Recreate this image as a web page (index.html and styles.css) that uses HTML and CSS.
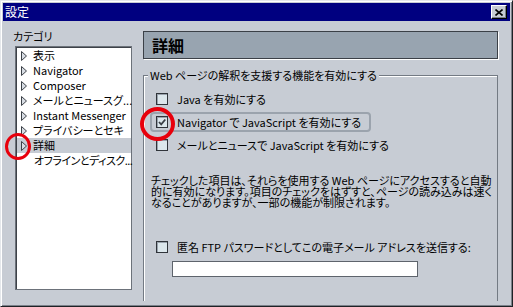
FILE: index.html
```html
<!DOCTYPE html>
<html lang="ja">
<head>
    <meta charset="UTF-8">
    <meta name="viewport" content="width=device-width, initial-scale=1.0">
    <title>設定</title>
    <link rel="stylesheet" href="styles.css">
</head>
<body>

<div class="window">
    <div class="titlebar">
        <span class="title">設定</span>
        <span class="close-btn">
            <svg width="8" height="7" viewBox="0 0 8 7">
                <path d="M0.5 0.5 L7.5 6.5 M7.5 0.5 L0.5 6.5" stroke="#000" stroke-width="1.6" fill="none"/>
            </svg>
        </span>
    </div>

    <div class="content">
        <div class="categories">
            <div class="cat-label">カテゴリ</div>
            <ul class="cat-list">
                <li><svg class="twisty" width="6" height="10" viewBox="0 0 6 10"><polygon points="0.5,0.5 5.5,5 0.5,9.5" fill="#d8dde4" stroke="#3c4148"/></svg>表示</li>
                <li><svg class="twisty" width="6" height="10" viewBox="0 0 6 10"><polygon points="0.5,0.5 5.5,5 0.5,9.5" fill="#d8dde4" stroke="#3c4148"/></svg>Navigator</li>
                <li><svg class="twisty" width="6" height="10" viewBox="0 0 6 10"><polygon points="0.5,0.5 5.5,5 0.5,9.5" fill="#d8dde4" stroke="#3c4148"/></svg>Composer</li>
                <li><svg class="twisty" width="6" height="10" viewBox="0 0 6 10"><polygon points="0.5,0.5 5.5,5 0.5,9.5" fill="#d8dde4" stroke="#3c4148"/></svg>メールとニュースグ...</li>
                <li><svg class="twisty" width="6" height="10" viewBox="0 0 6 10"><polygon points="0.5,0.5 5.5,5 0.5,9.5" fill="#d8dde4" stroke="#3c4148"/></svg>Instant Messenger</li>
                <li><svg class="twisty" width="6" height="10" viewBox="0 0 6 10"><polygon points="0.5,0.5 5.5,5 0.5,9.5" fill="#d8dde4" stroke="#3c4148"/></svg>プライバシーとセキ</li>
                <li class="selected"><svg class="twisty" width="6" height="10" viewBox="0 0 6 10"><polygon points="0.5,0.5 5.5,5 0.5,9.5" fill="#d8dde4" stroke="#3c4148"/></svg>詳細</li>
                <li class="leaf">オフラインとディスク...</li>
            </ul>
        </div>

        <div class="panel">
            <div class="panel-header">詳細</div>

            <fieldset class="group">
                <legend>Web ページの解釈を支援する機能を有効にする</legend>

                <label class="option"><span class="check"></span>Java を有効にする</label>
                <label class="option focused">
                    <span class="check">
                        <svg width="10" height="10" viewBox="0 0 10 10"><path d="M2 5 L4.2 7.3 L8.3 2.5" stroke="#3a3f46" stroke-width="1.8" fill="none"/></svg>
                    </span>Navigator で JavaScript を有効にする
                </label>
                <label class="option"><span class="check"></span>メールとニュースで JavaScript を有効にする</label>

                <p class="note">
                    チェックした項目は、それらを使用する Web ページにアクセスすると自動<br>
                    的に有効になります。項目のチェックをはずすと、ページの読み込みは速く<br>
                    なることがありますが、一部の機能が制限されます。
                </p>

                <label class="option"><span class="check"></span>匿名 FTP パスワードとしてこの電子メール アドレスを送信する:</label>
                <div class="text-field"></div>
            </fieldset>
        </div>
    </div>

    <!-- annotation rings -->
    <span class="ring ring-tree"></span>
    <span class="ring ring-check"></span>
</div>

</body>
</html>
```

FILE: styles.css
```css
body {
    margin: 0;
    font-family: "Noto Sans CJK JP", sans-serif;
    font-size: 11px;
    font-feature-settings: "palt";
    color: #000;
}

.window {
    position: relative;
    width: 513px;
    height: 307px;
    box-sizing: border-box;
    padding: 2px;
    background-color: #c7ccd4;
    border-top: 1px solid #e4e7eb;
    border-left: 1px solid #e4e7eb;
    border-right: 1px solid #1e2226;
    border-bottom: 1px solid #1e2226;
    box-shadow: inset 1px 1px 0 #fff, inset -1px -1px 0 #7b818a;
    overflow: hidden;
}

.titlebar {
    height: 18px;
    background-color: #000080;
    display: flex;
    align-items: center;
    justify-content: space-between;
    padding: 0 3px 0 2px;
}

.title {
    color: #fff;
    font-size: 12px;
    line-height: 18px;
}

.close-btn {
    width: 16px;
    height: 14px;
    box-sizing: border-box;
    background-color: #c7ccd4;
    border-top: 1px solid #fff;
    border-left: 1px solid #fff;
    border-right: 1px solid #000;
    border-bottom: 1px solid #000;
    box-shadow: inset -1px -1px 0 #7b818a;
    display: flex;
    align-items: center;
    justify-content: center;
}

.content {
    display: flex;
    gap: 11px;
    padding-left: 10px;
}

/* category tree */
.categories {
    padding-top: 9px;
    width: 119px;
}

.cat-label {
    line-height: 13px;
}

.cat-list {
    list-style: none;
    margin: 3px 0 0 2px;
    padding: 1px 0 0;
    width: 117px;
    height: 244px;
    box-sizing: border-box;
    background-color: #fff;
    border: 1px solid #6c727a;
    box-shadow: inset 1px 1px 0 #3d4148;
}

.cat-list li {
    height: 15px;
    line-height: 15px;
    display: flex;
    align-items: center;
    padding-left: 4px;
    margin-left: 1px;
    white-space: nowrap;
}

.cat-list li.selected {
    background-color: #c7ccd4;
}

.cat-list li.leaf {
    padding-left: 17px;
    letter-spacing: -0.5px;
}

.twisty {
    flex-shrink: 0;
    margin-right: 6px;
}

/* right panel */
.panel {
    width: 355px;
    padding-top: 10px;
}

.panel-header {
    height: 28px;
    box-sizing: border-box;
    background-color: #98a4b0;
    border: 1px solid #3b4047;
    box-shadow: 1px 1px 0 #fff;
    font-size: 16px;
    font-weight: bold;
    line-height: 26px;
    padding-left: 8px;
}

.group {
    margin: 10px 0 0;
    padding: 7px 0 0;
    height: 232px;
    box-sizing: border-box;
    border: 1px solid #737a83;
    border-bottom: none;
    box-shadow: inset 1px 1px 0 #fff;
}

.group legend {
    margin-left: 4px;
    padding: 0 2px;
    line-height: 13px;
    background-color: #c7ccd4;
}

.option {
    display: flex;
    align-items: center;
    width: fit-content;
    height: 20px;
    box-sizing: border-box;
    margin: 0 0 3px 6px;
    padding: 0 8px 0 4px;
    border: 2px solid transparent;
    border-radius: 4px;
    white-space: nowrap;
}

.option.focused {
    border-color: #9ba3ad;
}

.check {
    width: 12px;
    height: 12px;
    box-sizing: border-box;
    margin-right: 9px;
    background-color: #dce7ec;
    border: 1px solid #30343a;
    box-shadow: inset 1px 1px 0 #9aa3ad;
    display: flex;
    align-items: center;
    justify-content: center;
}

.note {
    margin: 20px 0 29px 7px;
    line-height: 11px;
    white-space: nowrap;
}

.text-field {
    width: 246px;
    height: 16px;
    box-sizing: border-box;
    margin: 4px 0 0 28px;
    background-color: #fff;
    border: 1px solid #5e646c;
}

/* red annotation rings */
.ring {
    position: absolute;
    box-sizing: border-box;
    border-radius: 50%;
    border: 3px solid #e8000c;
}

.ring-tree {
    left: 4px;
    top: 132px;
    width: 26px;
    height: 27px;
}

.ring-check {
    left: 139px;
    top: 106px;
    width: 35px;
    height: 34px;
    border-width: 4px;
}
```
